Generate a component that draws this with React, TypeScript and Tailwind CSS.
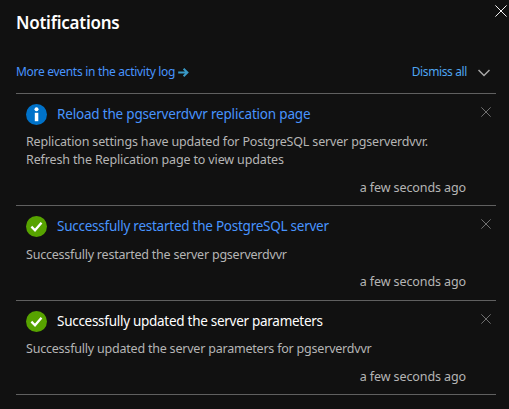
import React from "react";

type Notice = {
  kind: "info" | "success";
  title: string;
  titleClass: string;
  lines: { text: string; className: string }[];
  heightClass: string;
  bodyClass: string;
  timeClass: string;
};

const notices: Notice[] = [
  {
    kind: "info",
    title: "Reload the pgserverdvvr replication page",
    titleClass: "text-[#4894fe] tracking-[-0.19px]",
    lines: [
      { text: "Replication settings have updated for PostgreSQL server pgserverdvvr.", className: "tracking-[-0.16px]" },
      { text: "Refresh the Replication page to view updates", className: "tracking-[-0.14px]" },
    ],
    heightClass: "h-[112px]",
    bodyClass: "mt-[8px]",
    timeClass: "mb-[8px]",
  },
  {
    kind: "success",
    title: "Successfully restarted the PostgreSQL server",
    titleClass: "text-[#4894fe] tracking-[-0.25px]",
    lines: [{ text: "Successfully restarted the server pgserverdvvr", className: "tracking-[-0.22px]" }],
    heightClass: "h-[95px]",
    bodyClass: "mt-[9px]",
    timeClass: "mb-[9px]",
  },
  {
    kind: "success",
    title: "Successfully updated the server parameters",
    titleClass: "text-white tracking-[-0.28px]",
    lines: [{ text: "Successfully updated the server parameters for pgserverdvvr", className: "tracking-[-0.21px]" }],
    heightClass: "h-[94px]",
    bodyClass: "mt-[8px]",
    timeClass: "mb-[8px]",
  },
];

function StatusIcon({ kind }: { kind: Notice["kind"] }) {
  return (
    <svg className="size-[21px] shrink-0" viewBox="0 0 21 21">
      {kind === "info" ? (
        <>
          <circle cx="10.5" cy="10.5" r="10.5" fill="#0072c9" />
          <circle cx="10.5" cy="5.3" r="2" fill="#fff" />
          <rect x="8.8" y="8.8" width="3.5" height="8.4" fill="#fff" />
        </>
      ) : (
        <>
          <circle cx="10.5" cy="10.5" r="10.5" fill="#57a300" />
          <path d="M5.4 10.6 9 14.2 15.5 6.7" fill="none" stroke="#fff" strokeWidth="2.3" />
        </>
      )}
    </svg>
  );
}

function Cross({ className }: { className: string }) {
  return (
    <svg className={className} viewBox="0 0 12 12" fill="none" stroke="currentColor">
      <path d="M.4.4 11.6 11.6M11.6.4.4 11.6" vectorEffect="non-scaling-stroke" />
    </svg>
  );
}

export default function App() {
  return (
    <main className="h-[409px] w-[509px] overflow-hidden bg-[#111111] font-['Noto_Sans',sans-serif] whitespace-nowrap">
      <header className="flex h-[58px] items-start justify-between pl-4 pr-[2px]">
        <h1 className="pt-[11px] text-[17px] font-semibold leading-6 tracking-[-0.25px] text-white">Notifications</h1>
        <Cross className="mt-[5px] size-[12px] text-[#f4f4f4]" />
      </header>
      <div className="ml-4 flex h-[35px] w-[480px] items-start justify-between pr-[6px]">
        <a className="flex items-center text-[12px] leading-[26px] text-[#4894fe]">
          <span className="pt-px tracking-[-0.3px]">More events in the activity log</span>
          <svg className="ml-[3px] mt-[2px] h-[9px] w-[11px] text-[#3999c6]" viewBox="0 0 11 9" fill="none" stroke="currentColor" strokeWidth="2">
            <path d="M.2 4.5H9.3M5.6.8 9.4 4.5 5.6 8.2" />
          </svg>
        </a>
        <div className="flex items-center text-[12px] leading-[26px] text-[#4fa5f0]">
          <span className="pt-px tracking-[-0.38px]">Dismiss all</span>
          <svg className="ml-[11px] mt-[2px] h-[8px] w-[12px] text-[#a8a8a8]" viewBox="0 0 12 8" fill="none" stroke="currentColor" strokeWidth="1.5">
            <path d="M.5 1 6 6.5 11.5 1" />
          </svg>
        </div>
      </div>
      <section className="ml-4 w-[480px] border-b border-[#606060]">
        {notices.map((n) => (
          <article key={n.title} className={`flex flex-col border-t border-[#606060] pl-[10px] pr-[5px] ${n.heightClass}`}>
            <div className="flex items-start">
              <div className="flex flex-1 items-center pt-[10px]">
                <StatusIcon kind={n.kind} />
                <h2 className={`ml-[10px] text-[13.5px] leading-[21px] ${n.titleClass}`}>{n.title}</h2>
              </div>
              <Cross className="mt-[13px] size-[10px] text-[#707070]" />
            </div>
            <div className={`text-[12.5px] leading-[18px] text-[#b5b5b5] ${n.bodyClass}`}>
              {n.lines.map((line) => (
                <p key={line.text} className={line.className}>{line.text}</p>
              ))}
            </div>
            <time className={`mt-auto self-end pr-[25px] text-[12.5px] leading-[18px] tracking-[-0.1px] text-[#b5b5b5] ${n.timeClass}`}>
              a few seconds ago
            </time>
          </article>
        ))}
      </section>
    </main>
  );
}
